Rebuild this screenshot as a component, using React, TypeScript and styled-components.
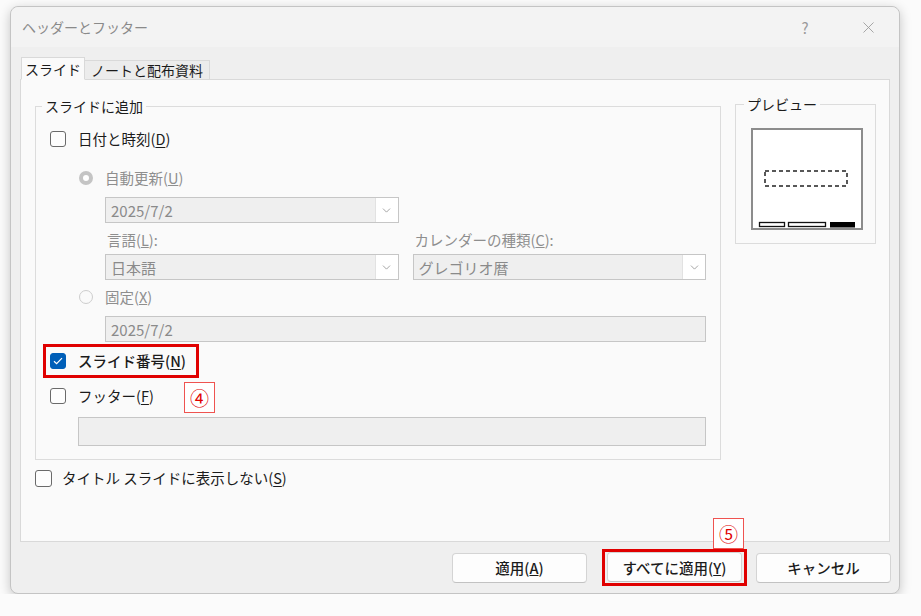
import React from "react"
import styled, { createGlobalStyle } from "styled-components"
import { ChevronDown, X } from "lucide-react"

const GlobalStyle = createGlobalStyle`
  html, body {
    margin: 0;
    padding: 0;
    background: #fbfbfb;
  }
  body {
    font-family: "Noto Sans CJK JP", "Noto Sans", sans-serif;
    font-size: 14px;
    color: #1b1b1b;
  }
`

const App = () => {
  return (
    <>
      <GlobalStyle />
      <Page>
        <Dialog>
          <TitleBar>
            <Title>ヘッダーとフッター</Title>
            <TitleButtons>
              <TitleButton>?</TitleButton>
              <TitleButton>
                <X size={19} strokeWidth={1.1} />
              </TitleButton>
            </TitleButtons>
          </TitleBar>

          <Tabs>
            <Tab $active>スライド</Tab>
            <Tab>ノートと配布資料</Tab>
          </Tabs>

          <Panel>
            <Groups>
              <Group>
                <Legend>スライドに追加</Legend>

                <CheckRow>
                  <CheckBox />
                  <span>日付と時刻(<u>D</u>)</span>
                </CheckRow>

                <RadioRow $mt={19}>
                  <Radio $selected />
                  <span>自動更新(<u>U</u>)</span>
                </RadioRow>

                <SelectGrid $mt={9}>
                  <SelectBox value="2025/7/2" />
                </SelectGrid>

                <SelectGrid $mt={8}>
                  <FieldLabel>言語(<u>L</u>):</FieldLabel>
                  <FieldLabel>カレンダーの種類(<u>C</u>):</FieldLabel>
                </SelectGrid>

                <SelectGrid $mt={5}>
                  <SelectBox value="日本語" />
                  <SelectBox value="グレゴリオ暦" />
                </SelectGrid>

                <RadioRow $mt={7}>
                  <Radio />
                  <span>固定(<u>X</u>)</span>
                </RadioRow>

                <TextInput $mt={9} $indent={55}>2025/7/2</TextInput>

                <Highlight>
                  <CheckRow $dark>
                    <CheckBox $checked>
                      <svg width="10" height="8" viewBox="0 0 10 8">
                        <path d="M1 4.2 L3.6 6.6 L9 1.2" fill="none" stroke="#fff" strokeWidth="1.2" />
                      </svg>
                    </CheckBox>
                    <span>スライド番号(<u>N</u>)</span>
                  </CheckRow>
                </Highlight>

                <FooterRow>
                  <CheckBox />
                  <span>フッター(<u>F</u>)</span>
                  <Marker $left={134} $top={-4}>④</Marker>
                </FooterRow>

                <TextInput $mt={11} $indent={28} $h={29} />
              </Group>

              <PreviewGroup>
                <Legend $shift={-7}>プレビュー</Legend>
                <svg width="112" height="102" viewBox="0 0 112 102">
                  <rect x="1" y="1" width="110" height="100" fill="#fff" stroke="#8c8c8c" strokeWidth="2" />
                  <rect x="14" y="43" width="82" height="15" fill="none" stroke="#222" strokeWidth="1.5" strokeDasharray="4 3" />
                  <rect x="8.5" y="94.5" width="25" height="4" fill="#fff" stroke="#111" strokeWidth="1.3" />
                  <rect x="37.5" y="94.5" width="37" height="4" fill="#fff" stroke="#111" strokeWidth="1.3" />
                  <rect x="79" y="94" width="25" height="5.5" fill="#000" />
                </svg>
              </PreviewGroup>
            </Groups>

            <TitleRow>
              <CheckBox $size={17} />
              <span>タイトル スライドに表示しない(<u>S</u>)</span>
            </TitleRow>
          </Panel>

          <Footer>
            <Button $mr={15}>適用(<u>A</u>)</Button>
            <Highlight $button>
              <Button>すべてに適用(<u>Y</u>)</Button>
              <Marker $right={0} $top={-34}>⑤</Marker>
            </Highlight>
            <Button $ml={9}>キャンセル</Button>
          </Footer>
        </Dialog>
      </Page>
    </>
  )
}

const SelectBox = ({ value }: { value: string }) => (
  <Select>
    <SelectValue>{value}</SelectValue>
    <DropButton>
      <ChevronDown size={13} strokeWidth={1.4} />
    </DropButton>
  </Select>
)

export default App

const Page = styled.div`
  padding: 6px 0 0 10px;
`

const Dialog = styled.div`
  width: 890px;
  height: 588px;
  box-sizing: border-box;
  border: 1px solid #c4c4c4;
  border-radius: 8px;
  background: #efefef;
  box-shadow: 0 3px 12px rgba(0, 0, 0, 0.22);
  display: flex;
  flex-direction: column;
`

const TitleBar = styled.div`
  height: 40px;
  background: #f3f3f3;
  border-radius: 8px 8px 0 0;
  display: flex;
  align-items: center;
  justify-content: space-between;
  padding: 0 8px 0 11px;
`

const Title = styled.div`
  font-size: 14px;
  color: #8a8a8a;
`

const TitleButtons = styled.div`
  display: flex;
  gap: 17px;
`

const TitleButton = styled.div`
  width: 46px;
  height: 40px;
  display: flex;
  align-items: center;
  justify-content: center;
  color: #9a9a9a;
  font-size: 15px;
`

const Tabs = styled.div`
  display: flex;
  align-items: flex-end;
  margin: 10px 0 -1px 10px;
  height: 23px;
  position: relative;
  z-index: 1;
`

const Tab = styled.div<{ $active?: boolean }>`
  height: ${(p) => (p.$active ? "23px" : "20px")};
  padding: 0 ${(p) => (p.$active ? "3px" : "6px")};
  box-sizing: border-box;
  border: 1px solid #d9d9d9;
  border-bottom: ${(p) => (p.$active ? "1px solid #fafafa" : "1px solid #d9d9d9")};
  border-left: ${(p) => (p.$active ? "1px solid #d9d9d9" : "none")};
  background: ${(p) => (p.$active ? "#fafafa" : "#ececec")};
  display: flex;
  align-items: center;
  font-size: 14px;
  line-height: 20px;
  color: #1b1b1b;
`

const Panel = styled.div`
  flex: 1;
  margin: 0 9px;
  border: 1px solid #d9d9d9;
  background: #fafafa;
  padding: 16px 13px 0 14px;
`

const Groups = styled.div`
  display: flex;
  align-items: flex-start;
  gap: 14px;
`

const Group = styled.fieldset`
  flex: 1;
  min-width: 0;
  margin: 0;
  padding: 13px 14px 13px 14px;
  border: 1px solid #dcdcdc;
  display: flex;
  flex-direction: column;
`

const PreviewGroup = styled.fieldset`
  width: 140px;
  box-sizing: border-box;
  margin: -2px 0 0 0;
  padding: 14px 12px 13px 15px;
  border: 1px solid #dcdcdc;
  svg {
    display: block;
  }
`

const Legend = styled.legend<{ $shift?: number }>`
  padding: 0 3px;
  margin-left: ${(p) => p.$shift ?? -8}px;
  font-size: 14px;
  line-height: 20px;
  color: #1b1b1b;
`

const CheckRow = styled.div<{ $dark?: boolean }>`
  display: flex;
  align-items: center;
  gap: 12px;
  height: 20px;
  font-size: 14.5px;
  line-height: 20px;
  color: #1b1b1b;
  font-weight: ${(p) => (p.$dark ? 500 : 400)};
  u {
    text-underline-offset: 2px;
  }
`

const FooterRow = styled(CheckRow)`
  margin-top: 8px;
  position: relative;
`

const TitleRow = styled(CheckRow)`
  margin-top: 8px;
  gap: 10px;
`

const CheckBox = styled.div<{ $checked?: boolean; $size?: number }>`
  width: ${(p) => p.$size ?? 16}px;
  height: ${(p) => p.$size ?? 16}px;
  box-sizing: border-box;
  border-radius: 3px;
  border: 1px solid ${(p) => (p.$checked ? "#005fb8" : "#6a6a6a")};
  background: ${(p) => (p.$checked ? "#005fb8" : "#fdfdfd")};
  display: flex;
  align-items: center;
  justify-content: center;
  flex-shrink: 0;
`

const RadioRow = styled.div<{ $mt: number }>`
  display: flex;
  align-items: center;
  gap: 12px;
  height: 20px;
  margin: ${(p) => p.$mt}px 0 0 29px;
  font-size: 14.5px;
  line-height: 20px;
  color: #8e8e8e;
`

const Radio = styled.div<{ $selected?: boolean }>`
  width: 14px;
  height: 14px;
  box-sizing: border-box;
  border-radius: 50%;
  flex-shrink: 0;
  border: ${(p) => (p.$selected ? "4px solid #c4c4c4" : "1px solid #cdcdcd")};
  background: ${(p) => (p.$selected ? "#fff" : "#fafafa")};
`

const SelectGrid = styled.div<{ $mt: number }>`
  display: grid;
  grid-template-columns: 1fr 1fr;
  column-gap: 14px;
  margin: ${(p) => p.$mt}px 0 0 55px;
`

const FieldLabel = styled.div`
  height: 18px;
  line-height: 18px;
  font-size: 14.5px;
  color: #8e8e8e;
  padding-left: 2px;
`

const Select = styled.div`
  height: 26px;
  box-sizing: border-box;
  border: 1px solid #c6c6c6;
  background: #efefef;
  display: flex;
  align-items: stretch;
`

const SelectValue = styled.div`
  flex: 1;
  padding-left: 5px;
  display: flex;
  align-items: center;
  font-size: 15px;
  color: #8a8a8a;
`

const DropButton = styled.div`
  width: 22px;
  background: #fff;
  border-left: 1px solid #e2e2e2;
  display: flex;
  align-items: center;
  justify-content: center;
  color: #8a8a8a;
`

const TextInput = styled.div<{ $mt: number; $indent: number; $h?: number }>`
  height: ${(p) => p.$h ?? 26}px;
  box-sizing: border-box;
  margin: ${(p) => p.$mt}px 0 0 ${(p) => p.$indent}px;
  border: 1px solid #c6c6c6;
  background: #efefef;
  padding-left: 5px;
  display: flex;
  align-items: center;
  font-size: 15px;
  color: #8a8a8a;
`

const Highlight = styled.div<{ $button?: boolean }>`
  position: relative;
  align-self: flex-start;
  border: 3px solid #e00000;
  padding: ${(p) => (p.$button ? "0 2px 1px 2px" : "4px 10px 4px 4px")};
  margin: ${(p) => (p.$button ? "0" : "2px 0 0 -7px")};
`

const Marker = styled.div<{ $left?: number; $right?: number; $top: number }>`
  position: absolute;
  ${(p) => (p.$left !== undefined ? `left: ${p.$left}px;` : "")}
  ${(p) => (p.$right !== undefined ? `right: ${p.$right}px;` : "")}
  top: ${(p) => p.$top}px;
  width: 31px;
  height: 31px;
  box-sizing: border-box;
  border: 1px solid #ef5350;
  background: #fff;
  color: #e00000;
  font-size: 19px;
  font-weight: 400;
  display: flex;
  align-items: center;
  justify-content: center;
`

const Footer = styled.div`
  display: flex;
  justify-content: flex-end;
  align-items: center;
  padding: 7px 8px 7px 0;
`

const Button = styled.div<{ $ml?: number; $mr?: number }>`
  width: 135px;
  height: 30px;
  box-sizing: border-box;
  margin-left: ${(p) => p.$ml ?? 0}px;
  margin-right: ${(p) => p.$mr ?? 0}px;
  border: 1px solid #d4d4d4;
  border-bottom-color: #c2c2c2;
  border-radius: 4px;
  background: #fdfdfd;
  display: flex;
  align-items: center;
  justify-content: center;
  font-size: 14.5px;
  color: #1b1b1b;
  font-weight: 500;
`
